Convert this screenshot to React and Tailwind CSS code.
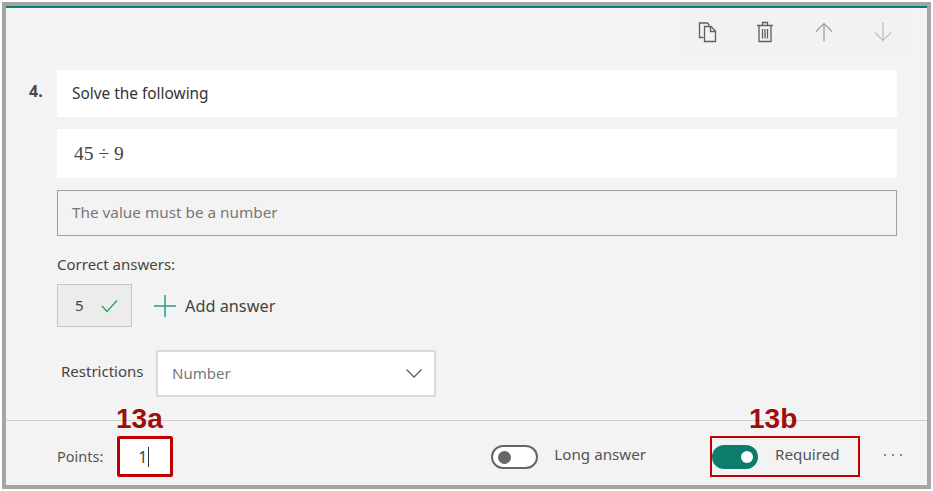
const font = { fontFamily: '"Noto Sans", "Open Sans", sans-serif' };

const CopyIcon = () => (
  <svg width="20" height="22" viewBox="0 0 20 22" fill="none" stroke="#5f5f5f" strokeWidth="1.3">
    <path d="M5.5 16.5H1.5V2H9.5L11.5 4.5" />
    <path d="M6.5 5.5H13L17.5 10V20.5H6.5Z" fill="#f2f2f2" />
    <path d="M12.5 5.5V10.5H17.5" />
  </svg>
);

const TrashIcon = () => (
  <svg width="18" height="22" viewBox="0 0 18 22" fill="none" stroke="#5f5f5f" strokeWidth="1.3">
    <path d="M1 4.5H17M6.5 4V1.5H11.5V4M3 4.5V20.5H15V4.5" />
    <path d="M6.5 8V17.5M9 8V17.5M11.5 8V17.5" />
  </svg>
);

const Arrow = ({ down, color }) => (
  <svg width="18" height="20" viewBox="0 0 18 20" fill="none" stroke={color} strokeWidth="1.4" className={down ? "rotate-180" : ""}>
    <path d="M9 19.5V1.5M1 9.5L9 1.5L17 9.5" />
  </svg>
);

export default function App() {
  return (
    <div className="relative w-[933px] h-[491px] bg-white pt-[2px] pl-[2px] pr-[2px] overflow-hidden" style={font}>
      <div className="relative h-[487px] w-[929px] border-4 border-[#a5a5a5] bg-[#f3f3f3] flex flex-col">
        <div className="h-[2px] bg-[#0b7d6c]" />

        <div className="h-[62px] pr-[22px] pl-[674px] pb-[14px]">
          <div className="h-full bg-[#f2f2f2] flex items-center justify-end pr-[13px]">
            <CopyIcon />
            <div className="ml-[38px]"><TrashIcon /></div>
            <div className="ml-[41px]"><Arrow color="#a3a3a3" /></div>
            <div className="ml-[41px]"><Arrow down color="#c4c4c4" /></div>
          </div>
        </div>

        <div className="flex flex-col pl-[51px] pr-[30px]">
          <div className="relative h-[47px] bg-white flex items-center pl-[15px] text-[15.4px] text-[#333333]">
            <span className="absolute -left-[28px] top-[9px] text-[16px] font-bold text-[#4a4a4a]">4.</span>
            <span className="mt-[1px]">Solve the following</span>
          </div>
          <div className="mt-3 h-[49px] bg-white flex items-center pl-[17px] text-[19.5px] text-[#444444]" style={{ fontFamily: '"Liberation Serif", serif' }}>
            45 ÷ 9
          </div>
          <div className="mt-3 h-[46px] border border-[#a0a0a0] flex items-center pl-[14px] text-[15.3px] text-[#777777]">
            <span className="-mt-[1px]">The value must be a number</span>
          </div>
          <div className="mt-[18px] text-[15px] leading-5 text-[#444444]">Correct answers:</div>
          <div className="mt-[10px] flex items-center">
            <div className="w-[75px] h-[43px] border border-[#c4c4c4] bg-[#ececec] flex items-center pl-[17px] gap-[17px] text-[15px] text-[#444444]">
              5
              <svg width="17" height="14" viewBox="0 0 17 14" fill="none" stroke="#2e9e55" strokeWidth="1.3">
                <path d="M1 7L6 12.5L16 1.5" />
              </svg>
            </div>
            <svg className="ml-[22px]" width="22" height="22" viewBox="0 0 22 22" fill="none" stroke="#2b9d8c" strokeWidth="1.5">
              <path d="M11 0V22M0 11H22" />
            </svg>
            <span className="ml-[9px] mt-[2px] text-[16.3px] text-[#444444]">Add answer</span>
          </div>
          <div className="mt-[23px] flex items-center">
            <span className="ml-[4px] -mt-[4px] w-[95px] text-[15px] text-[#444444]">Restrictions</span>
            <div className="w-[280px] h-[47px] border-2 border-[#dadada] bg-white flex items-center justify-between pl-[14px] pr-[12px] text-[15px] text-[#777777]">
              Number
              <svg width="16" height="9" viewBox="0 0 16 9" fill="none" stroke="#5f5f5f" strokeWidth="1.3">
                <path d="M0.5 0.5L8 8L15.5 0.5" />
              </svg>
            </div>
          </div>
        </div>

        <div className="mt-[23px] flex-1 border-t border-[#cfcfcf] flex items-center pl-[51px] pr-[25px] pt-[7px]">
          <span className="text-[14.5px] text-[#555555]">Points:</span>
          <div className="ml-[13px] w-[55px] h-[38px] bg-white flex items-center justify-center text-[16px] text-[#444444]">
            <span className="border-r border-[#333333] leading-5 pr-[1px]">1</span>
          </div>
          <div className="ml-[320px] w-[47px] h-[24px] mt-[1px] rounded-full border-2 border-[#666666] bg-white flex items-center pl-[5px]">
            <div className="w-[13px] h-[13px] rounded-full bg-[#666666]" />
          </div>
          <span className="ml-[16px] -mt-[4px] text-[15.2px] text-[#555555]">Long answer</span>
          <div className="ml-[66px] w-[46px] h-[24px] mt-[1px] rounded-full bg-[#0b7d6c] flex items-center justify-end pr-[5px]">
            <div className="w-[12px] h-[12px] rounded-full bg-white" />
          </div>
          <span className="ml-[17px] -mt-[4px] text-[15.2px] text-[#555555]">Required</span>
          <span className="ml-auto -mt-[3px] flex gap-[6px]">
            <i className="w-[2px] h-[2px] rounded-full bg-[#666666]" />
            <i className="w-[2px] h-[2px] rounded-full bg-[#666666]" />
            <i className="w-[2px] h-[2px] rounded-full bg-[#666666]" />
          </span>
        </div>
      </div>

      {/* annotations over the form */}
      <span className="absolute left-[116px] top-[403px] text-[28px] leading-8 font-bold text-[#a00d0d]" style={{ fontFamily: '"Liberation Sans", sans-serif' }}>13a</span>
      <div className="absolute left-[117px] top-[436px] w-[56px] h-[41px] border-[3px] border-[#c00000] rounded-[2px]" />
      <span className="absolute left-[749px] top-[403px] text-[28px] leading-8 font-bold text-[#a00d0d]" style={{ fontFamily: '"Liberation Sans", sans-serif' }}>13b</span>
      <div className="absolute left-[710px] top-[436px] w-[150px] h-[41px] border-2 border-[#c00000]" />
    </div>
  );
}
